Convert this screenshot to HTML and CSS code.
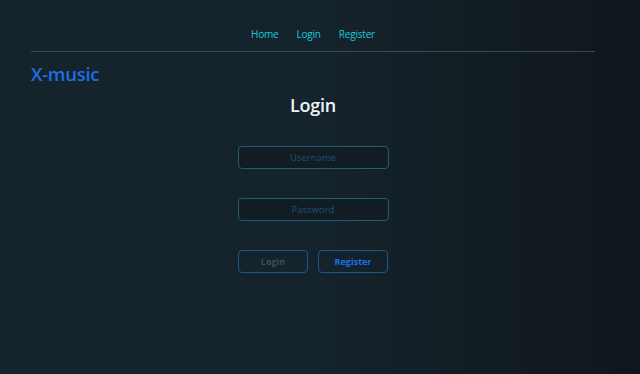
FILE: index.html
```html
<!DOCTYPE html>
<html lang="en">
<head>
    <meta charset="UTF-8">
    <meta name="viewport" content="width=device-width, initial-scale=1.0">
    <title>X-music | Login</title>
    <link rel="stylesheet" href="styles.css">
</head>
<body>
    <div class="page">
        <nav class="top-nav">
            <a href="#">Home</a>
            <a href="#">Login</a>
            <a href="#">Register</a>
        </nav>
        <div class="brand">X-music</div>
        <div class="login-box">
            <h1>Login</h1>
            <input type="text" placeholder="Username">
            <input type="password" placeholder="Password">
            <div class="actions">
                <button class="btn-login">Login</button>
                <button class="btn-register">Register</button>
            </div>
        </div>
    </div>
</body>
</html>
```

FILE: styles.css
```css
html, body {
    height: 100%;
}
body {
    margin: 0;
    font-family: 'Open Sans', 'Noto Sans', sans-serif;
    background: linear-gradient(to right, #15232b 0%, #15232c 50%, #121d23 75%, #0e171d 100%);
    color: #fff;
}
.page {
    width: 564px;
    margin-left: 31px;
}
.top-nav {
    display: flex;
    justify-content: center;
    gap: 18px;
    padding: 27px 0 9px 0;
    border-bottom: 1px solid #3a4a50;
}
.top-nav a {
    color: #18c8d8;
    text-decoration: none;
    font-size: 10px;
    line-height: 15px;
    letter-spacing: -0.2px;
}
.brand {
    color: #1a6fe8;
    font-size: 18.5px;
    font-weight: 600;
    line-height: 24px;
    margin-top: 10px;
    letter-spacing: -0.3px;
}
.login-box {
    display: flex;
    flex-direction: column;
    align-items: center;
    width: 564px;
}
.login-box h1 {
    font-size: 18px;
    font-weight: 600;
    color: #eef4f8;
    margin: 7px 0 0 0;
    line-height: 24px;
    letter-spacing: -0.2px;
}
input {
    box-sizing: border-box;
    width: 151px;
    height: 23px;
    margin-top: 29px;
    background: #111d23;
    border: 1px solid #235e6c;
    border-radius: 4px;
    outline: none;
    text-align: center;
    font-family: inherit;
    font-size: 9.5px;
    color: #8fb;
}
input + input {
    margin-top: 29px;
}
input::placeholder {
    color: #1c5275;
}
.actions {
    display: flex;
    gap: 10px;
    margin-top: 29px;
}
button {
    box-sizing: border-box;
    width: 70px;
    height: 23px;
    background: transparent;
    border: 1px solid #1a5a8a;
    border-radius: 4px;
    font-family: inherit;
    font-size: 9px;
    font-weight: 700;
    cursor: pointer;
}
.btn-login {
    color: #34525e;
}
.btn-register {
    color: #1a6fe8;
}
```
